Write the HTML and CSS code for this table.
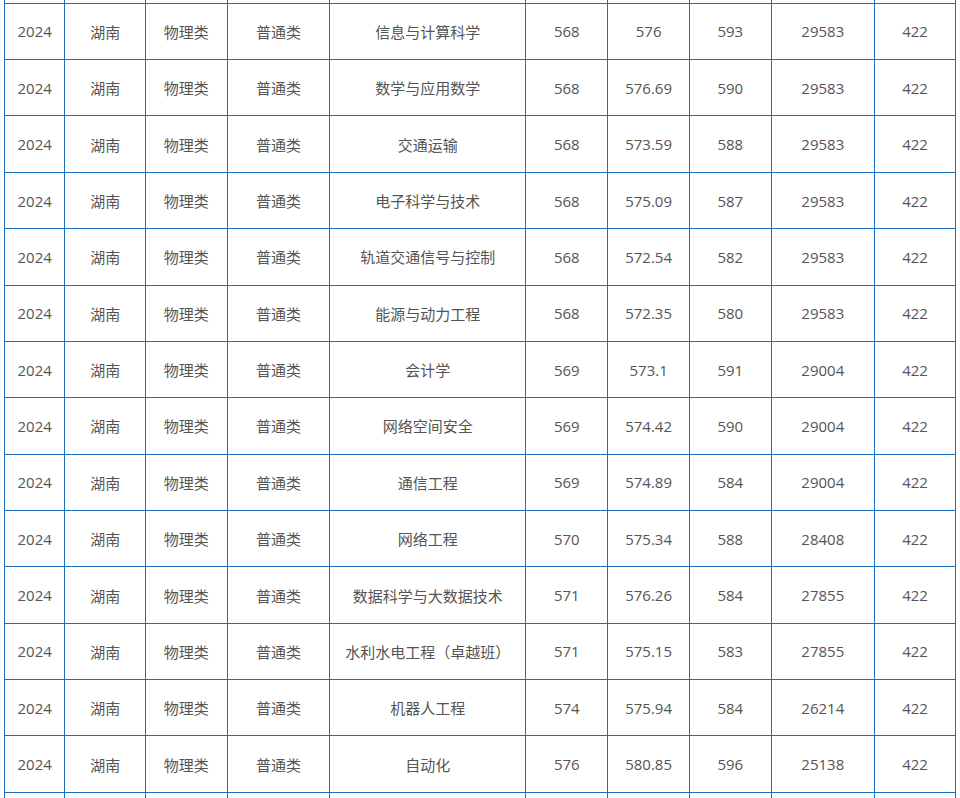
FILE: index.html
```html
<!DOCTYPE html>
<html lang="zh">
<head>
<meta charset="utf-8">
<link rel="stylesheet" href="styles.css">
</head>
<body>
<div class="wrap">
<table class="score">
<colgroup>
<col class="c1"><col class="c2"><col class="c3"><col class="c4"><col class="c5"><col class="c6"><col class="c7"><col class="c8"><col class="c9"><col class="c10">
</colgroup>
<tbody>
<tr class="cut"><td></td><td></td><td></td><td></td><td></td><td></td><td></td><td></td><td></td><td></td></tr>
<tr><td>2024</td><td>湖南</td><td>物理类</td><td>普通类</td><td>信息与计算科学</td><td>568</td><td>576</td><td>593</td><td>29583</td><td>422</td></tr>
<tr><td>2024</td><td>湖南</td><td>物理类</td><td>普通类</td><td>数学与应用数学</td><td>568</td><td>576.69</td><td>590</td><td>29583</td><td>422</td></tr>
<tr><td>2024</td><td>湖南</td><td>物理类</td><td>普通类</td><td>交通运输</td><td>568</td><td>573.59</td><td>588</td><td>29583</td><td>422</td></tr>
<tr><td>2024</td><td>湖南</td><td>物理类</td><td>普通类</td><td>电子科学与技术</td><td>568</td><td>575.09</td><td>587</td><td>29583</td><td>422</td></tr>
<tr><td>2024</td><td>湖南</td><td>物理类</td><td>普通类</td><td>轨道交通信号与控制</td><td>568</td><td>572.54</td><td>582</td><td>29583</td><td>422</td></tr>
<tr><td>2024</td><td>湖南</td><td>物理类</td><td>普通类</td><td>能源与动力工程</td><td>568</td><td>572.35</td><td>580</td><td>29583</td><td>422</td></tr>
<tr><td>2024</td><td>湖南</td><td>物理类</td><td>普通类</td><td>会计学</td><td>569</td><td>573.1</td><td>591</td><td>29004</td><td>422</td></tr>
<tr><td>2024</td><td>湖南</td><td>物理类</td><td>普通类</td><td>网络空间安全</td><td>569</td><td>574.42</td><td>590</td><td>29004</td><td>422</td></tr>
<tr><td>2024</td><td>湖南</td><td>物理类</td><td>普通类</td><td>通信工程</td><td>569</td><td>574.89</td><td>584</td><td>29004</td><td>422</td></tr>
<tr><td>2024</td><td>湖南</td><td>物理类</td><td>普通类</td><td>网络工程</td><td>570</td><td>575.34</td><td>588</td><td>28408</td><td>422</td></tr>
<tr><td>2024</td><td>湖南</td><td>物理类</td><td>普通类</td><td>数据科学与大数据技术</td><td>571</td><td>576.26</td><td>584</td><td>27855</td><td>422</td></tr>
<tr><td>2024</td><td>湖南</td><td>物理类</td><td>普通类</td><td>水利水电工程（卓越班）</td><td>571</td><td>575.15</td><td>583</td><td>27855</td><td>422</td></tr>
<tr><td>2024</td><td>湖南</td><td>物理类</td><td>普通类</td><td>机器人工程</td><td>574</td><td>575.94</td><td>584</td><td>26214</td><td>422</td></tr>
<tr><td>2024</td><td>湖南</td><td>物理类</td><td>普通类</td><td>自动化</td><td>576</td><td>580.85</td><td>596</td><td>25138</td><td>422</td></tr>
<tr class="cut"><td></td><td></td><td></td><td></td><td></td><td></td><td></td><td></td><td></td><td></td></tr>
</tbody>
</table>
</div>
</body>
</html>
```

FILE: styles.css
```css
html, body {
  margin: 0;
  padding: 0;
  background: #ffffff;
}
.wrap {
  width: 960px;
  height: 798px;
  overflow: hidden;
  padding-left: 4px;
  box-sizing: border-box;
}
.score {
  border-collapse: collapse;
  table-layout: fixed;
  width: 951.5px;
  margin-top: -53.6px;
  font-family: "Open Sans", "Noto Sans CJK SC", sans-serif;
  font-size: 15px;
  color: #555555;
}
.score td {
  border: 1px solid #1a6fc0;
  text-align: center;
  vertical-align: middle;
  padding: 0;
  white-space: nowrap;
}
.score tr {
  height: 56.36px;
}
.c1 { width: 60.3px; }
.c2 { width: 80.7px; }
.c3 { width: 81.7px; }
.c4 { width: 102.6px; }
.c5 { width: 196px; }
.c6 { width: 82px; }
.c7 { width: 81.7px; }
.c8 { width: 81.7px; }
.c9 { width: 103.3px; }
.c10 { width: 81.3px; }
```
